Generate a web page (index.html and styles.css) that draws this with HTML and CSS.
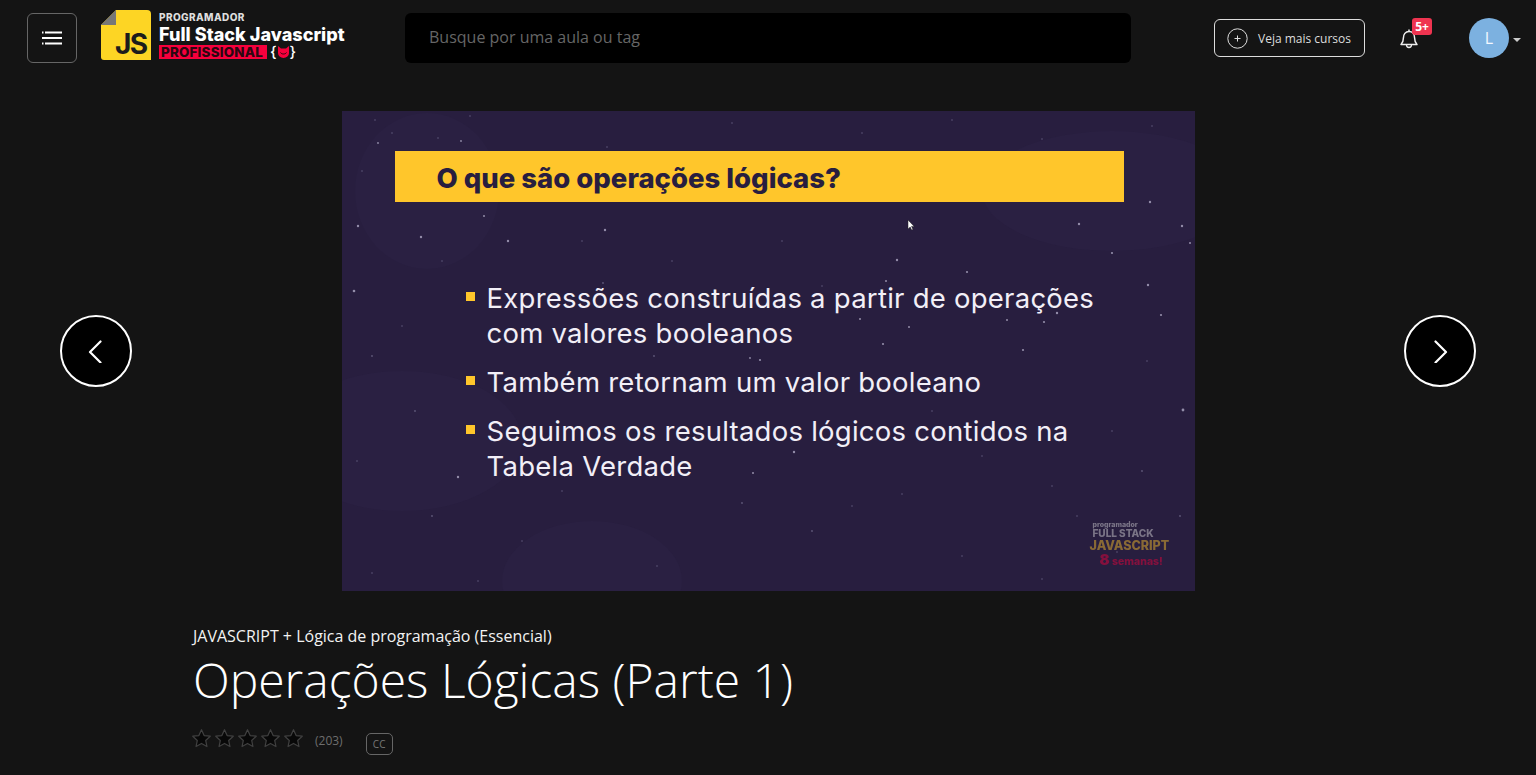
FILE: index.html

```html
<!DOCTYPE html>
<html lang="pt-BR">
<head>
<meta charset="UTF-8">
<meta name="viewport" content="width=device-width, initial-scale=1.0">
<title>Operações Lógicas (Parte 1)</title>
<link rel="stylesheet" href="styles.css">
</head>
<body>

<header class="topbar">
    <button class="menu-btn" aria-label="Menu">
        <svg width="20" height="14" viewBox="0 0 20 14">
            <path d="M3 1.500H20M0 1.500H1.500M0 7H20M3 12.500H20M0 12.500H1.500" stroke="#fff" stroke-width="2" fill="none"/>
        </svg>
    </button>

    <a class="logo" href="#">
        <svg class="logo-js" width="50" height="50" viewBox="0 0 50 50">
            <path d="M15 0H46a4 4 0 0 1 4 4V50H3a3 3 0 0 1-3-3V15Z" fill="#fdd524"/>
            <path d="M15 0V15H0Z" fill="#777"/>
        </svg>
        <span class="logo-js-text">JS</span>
        <span class="logo-text">
            <span class="logo-top">PROGRAMADOR</span>
            <span class="logo-main">Full Stack Javascript</span>
            <span class="logo-bottom">
                <span class="logo-pro">PROFISSIONAL</span>
                <span class="logo-brace">{<svg width="11" height="12" viewBox="0 0 11 12"><path d="M0 0 3 2.500H8L11 0V7a5.500 5 0 0 1-11 0Z" fill="#f6003c"/><path d="M2.500 6.500c1 2 5 2 6 0" stroke="#2b0710" fill="none"/></svg>}</span>
            </span>
        </span>
    </a>

    <div class="search">Busque por uma aula ou tag</div>

    <a class="more-btn" href="#">
        <svg width="21" height="21" viewBox="0 0 21 21">
            <circle cx="10.500" cy="10.500" r="9.700" stroke="#ddd" fill="none"/>
            <path d="M7.500 10.500H13.500M10.500 7.500V13.500" stroke="#ddd" fill="none"/>
        </svg>
        Veja mais cursos
    </a>

    <div class="bell">
        <svg width="20" height="22" viewBox="0 0 20 22">
            <path d="M2 17.500c1.600-1.500 2.400-3 2.400-6.500 0-3.600 2-6.500 5.600-6.500s5.600 2.900 5.600 6.500c0 3.500.8 5 2.400 6.500Z" stroke="#eee" stroke-width="1.500" fill="none" stroke-linejoin="round"/>
            <path d="M7.500 18c0 3.300 5 3.300 5 0" stroke="#eee" stroke-width="1.300" fill="none"/>
            <path d="M10 2.500V4.500" stroke="#eee" stroke-width="1.500"/>
        </svg>
        <span class="badge">5+</span>
    </div>

    <div class="user">
        <span class="avatar">L</span>
        <span class="caret"></span>
    </div>
</header>

<main>
    <section class="stage">
        <button class="arrow" aria-label="Anterior">
            <svg width="16" height="24" viewBox="0 -1 16 24"><path d="M12.500 1.500 2 12l10.500 10.500" stroke="#fff" stroke-width="2.200" fill="none" stroke-linecap="round" stroke-linejoin="round"/></svg>
        </button>

        <div class="video">
            <svg class="stars" width="853" height="480" viewBox="0 0 853 480">
                <g fill="#2a2042">
                    <ellipse cx="85" cy="80" rx="72" ry="78"/>
                    <ellipse cx="770" cy="80" rx="130" ry="60"/>
                    <ellipse cx="60" cy="330" rx="120" ry="70"/>
                    <ellipse cx="250" cy="470" rx="90" ry="60"/>
                </g>
                <g fill="#938da9">
                    <circle cx="16" cy="115" r="1.200"/><circle cx="79" cy="126" r="1.200"/><circle cx="166" cy="130" r="1.200"/><circle cx="142" cy="105" r="1"/>
                    <circle cx="263" cy="119" r="1.200"/><circle cx="12" cy="180" r="1.300"/><circle cx="119" cy="30" r=".9"/><circle cx="36" cy="32" r=".9"/>
                    <circle cx="808" cy="91" r="1.200"/><circle cx="737" cy="113" r="1.200"/><circle cx="840" cy="115" r="1.200"/><circle cx="848" cy="132" r="1"/>
                    <circle cx="770" cy="142" r="1.100"/><circle cx="555" cy="149" r="1.200"/><circle cx="625" cy="161" r="1.100"/><circle cx="544" cy="170" r="1"/><circle cx="806" cy="174" r="1.200"/>
                    <circle cx="715" cy="202" r="1.200"/><circle cx="665" cy="209" r="1"/><circle cx="702" cy="211" r="1.100"/><circle cx="819" cy="204" r="1.100"/><circle cx="567" cy="216" r="1"/>
                    <circle cx="541" cy="233" r="1.100"/><circle cx="681" cy="239" r="1.100"/><circle cx="518" cy="208" r="1"/><circle cx="418" cy="249" r="1.100"/><circle cx="408" cy="247" r=".9"/>
                    <circle cx="452" cy="341" r="1.200"/><circle cx="411" cy="362" r="1"/><circle cx="116" cy="366" r="1.200"/><circle cx="841" cy="299" r="1.400"/>
                </g>
                <g fill="#5f587a">
                    <circle cx="50" cy="22" r=".8"/><circle cx="96" cy="27" r=".8"/><circle cx="312" cy="245" r=".9"/><circle cx="261" cy="172" r=".9"/>
                    <circle cx="33" cy="9" r=".8"/><circle cx="128" cy="5" r=".8"/><circle cx="265" cy="36" r=".8"/><circle cx="390" cy="12" r=".8"/><circle cx="520" cy="22" r=".8"/>
                    <circle cx="610" cy="9" r=".8"/><circle cx="700" cy="28" r=".8"/><circle cx="810" cy="15" r=".8"/><circle cx="20" cy="60" r=".8"/><circle cx="30" cy="245" r=".9"/>
                    <circle cx="73" cy="300" r=".9"/><circle cx="15" cy="350" r=".8"/><circle cx="805" cy="250" r=".8"/><circle cx="770" cy="320" r=".8"/><circle cx="800" cy="360" r=".9"/>
                    <circle cx="220" cy="380" r=".8"/><circle cx="400" cy="392" r=".9"/><circle cx="560" cy="383" r=".8"/><circle cx="710" cy="375" r=".8"/><circle cx="90" cy="405" r=".9"/>
                    <circle cx="180" cy="430" r=".8"/><circle cx="315" cy="455" r=".8"/><circle cx="470" cy="420" r=".9"/><circle cx="620" cy="445" r=".8"/><circle cx="735" cy="405" r=".8"/>
                    <circle cx="30" cy="462" r=".8"/><circle cx="136" cy="470" r=".8"/><circle cx="700" cy="468" r=".8"/><circle cx="838" cy="405" r=".9"/><circle cx="775" cy="441" r=".8"/>
                    <circle cx="240" cy="130" r=".8"/><circle cx="330" cy="150" r=".8"/><circle cx="440" cy="130" r=".8"/><circle cx="480" cy="175" r=".8"/><circle cx="60" cy="215" r=".8"/>
                    <circle cx="100" cy="150" r=".8"/><circle cx="200" cy="350" r=".8"/><circle cx="590" cy="300" r=".8"/><circle cx="640" cy="345" r=".8"/><circle cx="510" cy="395" r=".8"/>
                </g>
            </svg>

            <h2 class="slide-title">O que são operações lógicas?</h2>

            <ul class="slide-list">
                <li>Expressões construídas a partir de operações<br>com valores booleanos</li>
                <li>Também retornam um valor booleano</li>
                <li>Seguimos os resultados lógicos contidos na<br>Tabela Verdade</li>
            </ul>

            <div class="watermark">
                <span class="wm-small">programador</span>
                <span class="wm-full">FULL STACK</span>
                <span class="wm-js">JAVASCRIPT</span>
                <span class="wm-red"><b>8</b> semanas!</span>
            </div>

            <svg class="cursor" width="8" height="12" viewBox="0 0 8 12"><path d="M1 1v9l2.200-2 1.500 3 1.300-.6-1.500-3h2.700Z" fill="#fff" stroke="#222" stroke-width=".5"/></svg>
        </div>

        <button class="arrow" aria-label="Próxima">
            <svg width="16" height="24" viewBox="0 -1 16 24"><path d="M3.500 1.500 14 12 3.500 22.500" stroke="#fff" stroke-width="2.200" fill="none" stroke-linecap="round" stroke-linejoin="round"/></svg>
        </button>
    </section>

    <section class="info">
        <div class="course">JAVASCRIPT + Lógica de programação (Essencial)</div>
        <h1 class="title">Operações Lógicas (Parte 1)</h1>
        <div class="meta">
            <div class="rating">
                <svg class="star" viewBox="0 0 24 24"><path d="M12 2l3 6.600 7 .8-5.200 4.800 1.400 7L12 17.700 5.800 21.200l1.400-7L2 9.400l7-.8Z"/></svg>
                <svg class="star" viewBox="0 0 24 24"><path d="M12 2l3 6.600 7 .8-5.200 4.800 1.400 7L12 17.700 5.800 21.200l1.400-7L2 9.400l7-.8Z"/></svg>
                <svg class="star" viewBox="0 0 24 24"><path d="M12 2l3 6.600 7 .8-5.200 4.800 1.400 7L12 17.700 5.800 21.200l1.400-7L2 9.400l7-.8Z"/></svg>
                <svg class="star" viewBox="0 0 24 24"><path d="M12 2l3 6.600 7 .8-5.200 4.800 1.400 7L12 17.700 5.800 21.200l1.400-7L2 9.400l7-.8Z"/></svg>
                <svg class="star" viewBox="0 0 24 24"><path d="M12 2l3 6.600 7 .8-5.200 4.800 1.400 7L12 17.700 5.800 21.200l1.400-7L2 9.400l7-.8Z"/></svg>
            </div>
            <span class="votes">(203)</span>
            <span class="cc">CC</span>
        </div>
    </section>
</main>

</body>
</html>
```

FILE: styles.css

```css
* {
    box-sizing: border-box;
}

body {
    margin: 0;
    height: 775px;
    overflow: hidden;
    background-color: #141414;
    color: #fff;
    font-family: "Open Sans", "Liberation Sans", sans-serif;
}

a {
    color: inherit;
    text-decoration: none;
}

button {
    padding: 0;
    font: inherit;
    cursor: pointer;
}

/* topo */
.topbar {
    display: flex;
    align-items: center;
    height: 76px;
    padding: 0 15px 0 27px;
}

.menu-btn {
    display: flex;
    align-items: center;
    justify-content: center;
    width: 50px;
    height: 50px;
    background: transparent;
    border: 1px solid #666;
    border-radius: 6px;
}

.logo {
    position: relative;
    display: flex;
    align-items: center;
    gap: 8px;
    flex-shrink: 0;
    width: 244px;
    margin: -6px 0 0 24px;
}

.logo-js {
    flex-shrink: 0;
}

.logo-js-text {
    position: absolute;
    left: 14px;
    top: 19px;
    font-family: "Inter", sans-serif;
    font-size: 28px;
    line-height: 30px;
    font-weight: 700;
    letter-spacing: -1.500px;
    color: #1c1c1c;
}

.logo-text {
    display: flex;
    flex-direction: column;
    font-family: "Inter", sans-serif;
    font-weight: 800;
}

.logo-top {
    font-size: 10px;
    line-height: 11px;
    letter-spacing: .4px;
    color: #ddd;
}

.logo-main {
    font-size: 18.100px;
    line-height: 22px;
    white-space: nowrap;
}

.logo-bottom {
    display: flex;
    align-items: center;
    gap: 3px;
}

.logo-pro {
    width: 108px;
    padding-left: 2px;
    background-color: #f6003c;
    color: #2b0710;
    font-size: 13.400px;
    line-height: 14px;
    letter-spacing: .2px;
    white-space: nowrap;
    overflow: hidden;
}

.logo-brace {
    display: flex;
    align-items: center;
    gap: 1px;
    font-size: 15px;
    line-height: 14px;
    font-weight: 500;
}

.search {
    flex-shrink: 0;
    width: 726px;
    height: 50px;
    margin-left: 60px;
    padding-left: 24px;
    background-color: #000;
    border-radius: 6px;
    color: #666;
    font-size: 16px;
    line-height: 48px;
}

.more-btn {
    display: flex;
    align-items: center;
    gap: 10px;
    flex-shrink: 0;
    width: 151px;
    height: 38px;
    margin-left: 83px;
    padding-left: 12px;
    border: 1px solid #ddd;
    border-radius: 6px;
    color: #ddd;
    font-size: 12px;
    font-weight: 500;
    white-space: nowrap;
}

.bell {
    position: relative;
    display: flex;
    margin-left: 34px;
}

.badge {
    position: absolute;
    left: 13px;
    top: -9px;
    width: 20px;
    height: 17px;
    background-color: #ef3450;
    border-radius: 3px;
    font-size: 12px;
    font-weight: 700;
    line-height: 17px;
    text-align: center;
}

.user {
    display: flex;
    align-items: center;
    gap: 4px;
    margin-left: 50px;
}

.avatar {
    width: 40px;
    height: 40px;
    background-color: #7cb1e0;
    border-radius: 50%;
    color: #f4f8ff;
    font-size: 16px;
    line-height: 40px;
    text-align: center;
}

.caret {
    margin-top: 3px;
    border-left: 4px solid transparent;
    border-right: 4px solid transparent;
    border-top: 4px solid #ccc;
}

/* video */
.stage {
    display: flex;
    align-items: center;
    justify-content: space-between;
    margin-top: 35px;
    padding: 0 60px;
}

.arrow {
    display: flex;
    align-items: center;
    justify-content: center;
    width: 72px;
    height: 72px;
    background-color: #000;
    border: 2px solid #fff;
    border-radius: 50%;
}

.video {
    position: relative;
    width: 853px;
    height: 480px;
    padding: 40px 71px 0 53px;
    background-color: #281e3f;
    font-family: "Inter", sans-serif;
    overflow: hidden;
}

.stars {
    position: absolute;
    left: 0;
    top: 0;
}

.slide-title {
    position: relative;
    height: 51px;
    margin: 0;
    padding-left: 42px;
    background-color: #ffc62b;
    color: #281e3f;
    font-size: 27.500px;
    font-weight: 800;
    line-height: 54px;
}

.slide-list {
    position: relative;
    margin: 79px 0 0 71px;
    padding: 0;
    list-style: none;
    color: #f2eff7;
    font-size: 27.500px;
    font-weight: 400;
    letter-spacing: .25px;
    line-height: 35px;
}

.slide-list li {
    position: relative;
    margin-bottom: 14px;
    padding-left: 21px;
    white-space: nowrap;
}

.slide-list li::before {
    content: "";
    position: absolute;
    left: 0;
    top: 11px;
    width: 9px;
    height: 9px;
    background-color: #ffc62b;
}

.watermark {
    position: absolute;
    left: 748px;
    top: 410px;
    display: flex;
    flex-direction: column;
    opacity: .45;
    filter: blur(.4px);
    font-weight: 800;
    white-space: nowrap;
}

.wm-small {
    font-size: 7px;
    line-height: 7px;
    color: #ddd;
    margin-left: 3px;
}

.wm-full {
    font-size: 10px;
    line-height: 11px;
    color: #ddd;
    margin-left: 3px;
}

.wm-js {
    font-size: 12.500px;
    line-height: 13px;
    color: #ffc62b;
}

.wm-red {
    margin-left: 10px;
    font-size: 10.500px;
    line-height: 15px;
    color: #f6003c;
}

.wm-red b {
    font-size: 15px;
}

.cursor {
    position: absolute;
    left: 565px;
    top: 108px;
}

/* dados da aula */
.info {
    margin-top: 34px;
    padding-left: 193px;
}

.course {
    font-size: 16px;
    line-height: 22px;
    color: #f2f2f2;
}

.title {
    margin: 0;
    font-size: 48px;
    line-height: 66px;
    font-weight: 300;
}

.meta {
    display: flex;
    align-items: flex-start;
    margin-top: 15px;
}

.rating {
    display: flex;
    gap: 2px;
    margin-left: -2px;
}

.star {
    width: 21px;
    height: 21px;
    fill: #080808;
    stroke: #404040;
    stroke-width: 1.400;
    stroke-linejoin: round;
}

.votes {
    margin: 5px 0 0 11px;
    color: #6e6e6e;
    font-size: 12px;
    line-height: 16px;
}

.cc {
    width: 27px;
    height: 22px;
    margin: 5px 0 0 23px;
    border: 1px solid #666;
    border-radius: 5px;
    color: #777;
    font-size: 10px;
    line-height: 20px;
    text-align: center;
}
```
